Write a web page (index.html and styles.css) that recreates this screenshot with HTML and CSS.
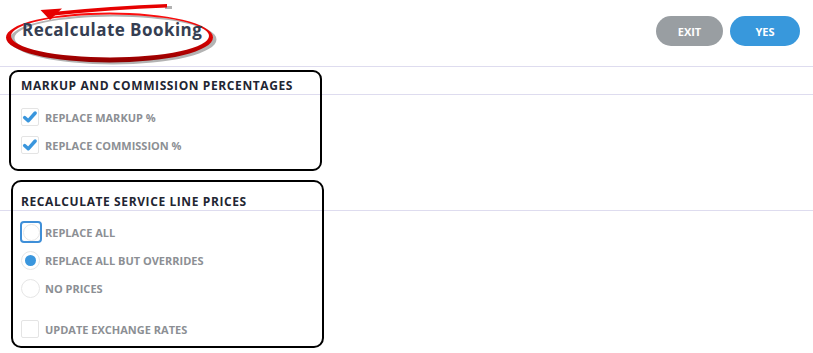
FILE: index.html
```html
<!DOCTYPE html>
<html lang="en">
<head>
<meta charset="utf-8">
<title>Recalculate Booking</title>
<link rel="stylesheet" href="styles.css">
</head>
<body>
<div class="page">
  <header class="header">
    <h1 class="title">Recalculate Booking</h1>
    <div class="actions">
      <button class="btn btn-exit">EXIT</button>
      <button class="btn btn-yes">YES</button>
    </div>
    <svg class="annot-oval" width="230" height="70" viewBox="0 0 230 70" aria-hidden="true">
      <defs>
        <linearGradient id="redg" x1="0" y1="0" x2="0" y2="1">
          <stop offset="0" stop-color="#ff1010"/>
          <stop offset="0.55" stop-color="#d80000"/>
          <stop offset="1" stop-color="#8e0000"/>
        </linearGradient>
      </defs>
      <path fill="#b3b3b3" fill-rule="evenodd" transform="translate(3.5,2)" d="M6,37.5 a103.5,25 0 1,0 207,0 a103.5,25 0 1,0 -207,0 Z M11,36 a99,21.5 0 1,0 198,0 a99,21.5 0 1,0 -198,0 Z"/>
      <path fill="#b3b3b3" d="M165,6 L172,6 L172,9 L165,9 Z"/>
      <path fill="url(#redg)" fill-rule="evenodd" d="M6,37.5 a103.5,25 0 1,0 207,0 a103.5,25 0 1,0 -207,0 Z M11,36 a99,21.5 0 1,0 198,0 a99,21.5 0 1,0 -198,0 Z"/>
      <path fill="#e60000" d="M167,4 L167,7.5 Q112,9.5 54,15.5 L52,12 Q112,6 167,4 Z"/>
      <path fill="#e60000" d="M40.5,10 L62,8.5 L50,20 Z"/>
    </svg>
  </header>

  <section class="section section-markup">
    <div class="annot-box annot-box-1"></div>
    <h2 class="section-title">MARKUP AND COMMISSION PERCENTAGES</h2>
    <div class="options">
      <label class="option">
        <span class="control"><span class="checkbox checked"><svg width="18" height="18" viewBox="0 0 18 18"><path d="M3.6,9.6 L7.2,12.8 L14.2,5" fill="none" stroke="#3a96dd" stroke-width="3.4" stroke-linecap="round" stroke-linejoin="round"/></svg></span></span>
        <span class="label">REPLACE MARKUP %</span>
      </label>
      <label class="option">
        <span class="control"><span class="checkbox checked"><svg width="18" height="18" viewBox="0 0 18 18"><path d="M3.6,9.6 L7.2,12.8 L14.2,5" fill="none" stroke="#3a96dd" stroke-width="3.4" stroke-linecap="round" stroke-linejoin="round"/></svg></span></span>
        <span class="label">REPLACE COMMISSION %</span>
      </label>
    </div>
  </section>

  <section class="section section-prices">
    <div class="annot-box annot-box-2"></div>
    <h2 class="section-title">RECALCULATE SERVICE LINE PRICES</h2>
    <div class="options options-prices">
      <label class="option">
        <span class="control"><span class="focus-ring"><span class="radio"></span></span></span>
        <span class="label">REPLACE ALL</span>
      </label>
      <label class="option">
        <span class="control"><span class="radio selected"><span class="dot"></span></span></span>
        <span class="label">REPLACE ALL BUT OVERRIDES</span>
      </label>
      <label class="option">
        <span class="control"><span class="radio"></span></span>
        <span class="label">NO PRICES</span>
      </label>
      <label class="option option-spaced">
        <span class="control"><span class="checkbox"></span></span>
        <span class="label">UPDATE EXCHANGE RATES</span>
      </label>
    </div>
  </section>
</div>
</body>
</html>
```

FILE: styles.css
```css
* { box-sizing: border-box; }

html, body {
  margin: 0;
  padding: 0;
  background: #ffffff;
}

body {
  font-family: "Open Sans", "Noto Sans", "Liberation Sans", sans-serif;
  width: 813px;
  height: 353px;
  overflow: hidden;
}

.page {
  position: relative;
}

.header {
  position: relative;
  height: 67px;
  border-bottom: 1px solid #dedcef;
  display: flex;
  align-items: flex-start;
  justify-content: space-between;
  padding: 16px 13px 0 22px;
}

.title {
  margin: 3px 0 0;
  font-size: 17px;
  line-height: 22px;
  font-weight: 700;
  letter-spacing: 0.45px;
  color: #353e52;
  position: relative;
  z-index: 1;
}

.actions {
  display: flex;
  gap: 7px;
}

.btn {
  height: 30px;
  border: none;
  border-radius: 15px;
  font-family: inherit;
  font-size: 11px;
  font-weight: 700;
  color: #ffffff;
  padding: 0;
  cursor: pointer;
}

.btn-exit {
  width: 67px;
  background: #999ea2;
}

.btn-yes {
  width: 70px;
  background: #3898dc;
}

.annot-oval {
  position: absolute;
  left: 0;
  top: 0;
  pointer-events: none;
}

.section {
  position: relative;
  padding-top: 11px;
}

.section-markup {
  padding-bottom: 24px;
}

.section-title {
  margin: 0;
  padding: 0 21px;
  font-size: 12px;
  line-height: 16px;
  font-weight: 700;
  letter-spacing: 0.6px;
  color: #1f2633;
  border-bottom: 1px solid #dedcef;
}

.options {
  display: flex;
  flex-direction: column;
  padding: 8px 0 0 21px;
}

.options-prices {
  padding-top: 7px;
}

.option {
  display: flex;
  align-items: center;
  height: 28px;
}

.option-spaced {
  margin-top: 13px;
}

.control {
  width: 24px;
  height: 28px;
  display: flex;
  align-items: center;
}

.checkbox {
  width: 18px;
  height: 18px;
  border: 1px solid #e4e4e4;
  border-radius: 2px;
  display: flex;
  align-items: center;
  justify-content: center;
  background: #fff;
}

.checkbox svg {
  display: block;
  flex: none;
}

.radio {
  width: 19px;
  height: 19px;
  border: 1px solid #e6e6e6;
  border-radius: 50%;
  background: #fff;
  display: flex;
  align-items: center;
  justify-content: center;
}

.radio .dot {
  width: 11px;
  height: 11px;
  border-radius: 50%;
  background: #3a96dd;
}

.focus-ring {
  margin-left: -1px;
  width: 22px;
  height: 22px;
  border: 2px solid #3f8fd8;
  border-radius: 4px;
  display: flex;
  align-items: center;
  justify-content: center;
}

.focus-ring .radio {
  width: 17px;
  height: 17px;
}

.label {
  font-size: 11px;
  font-weight: 700;
  color: #8c8f94;
}

.annot-box {
  position: absolute;
  border: 2px solid #000;
  pointer-events: none;
}

.annot-box-1 {
  left: 9px;
  top: 3px;
  width: 313px;
  height: 101px;
  border-radius: 9px;
}

.annot-box-2 {
  left: 11px;
  top: -3px;
  width: 313px;
  height: 168px;
  border-radius: 10px;
}
```
